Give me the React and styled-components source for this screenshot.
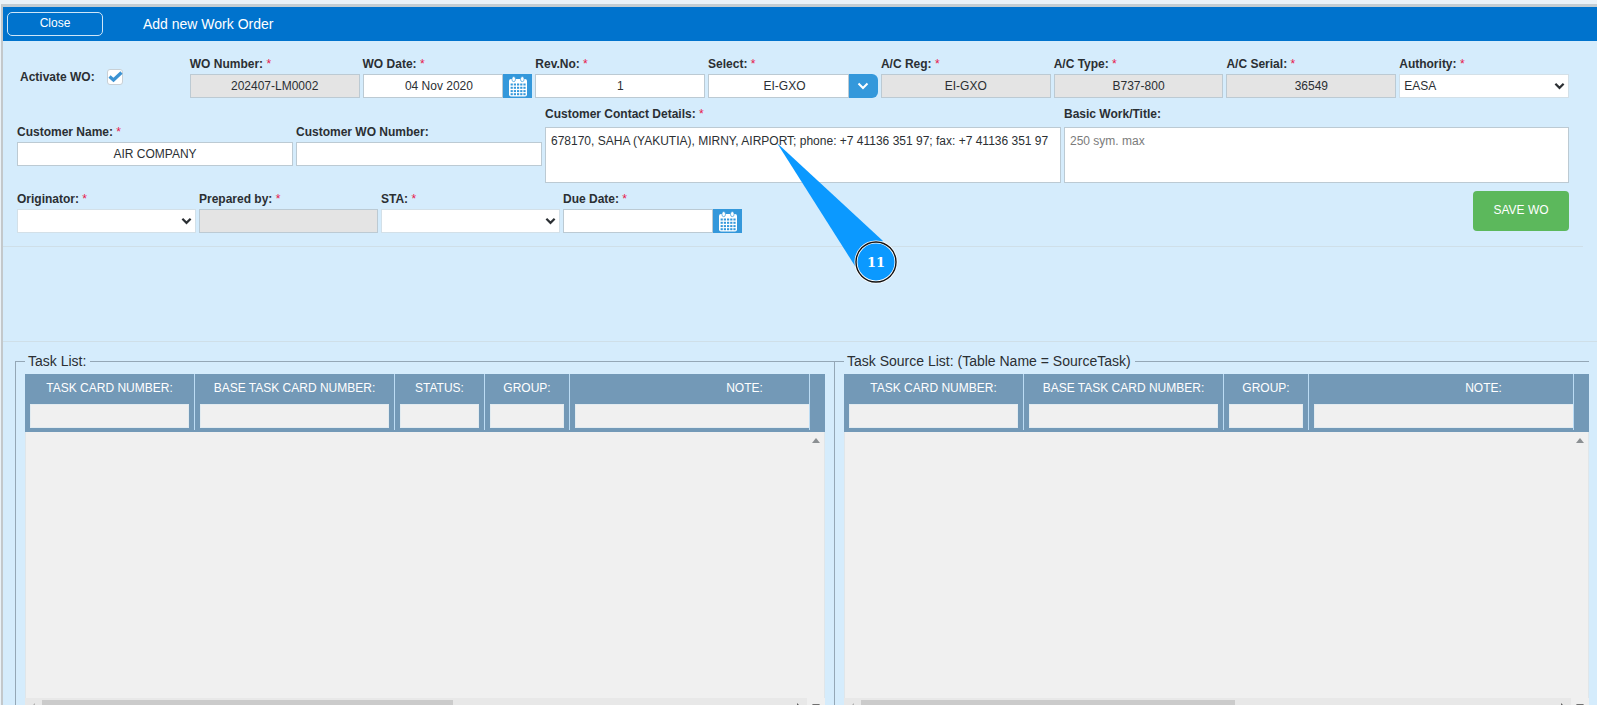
import React from "react";
import styled, { createGlobalStyle, css } from "styled-components";

const Global = createGlobalStyle`
  *, *::before, *::after { box-sizing: border-box; }
  body {
    margin: 0;
    background: #eaf2f8;
    color: #2b2f33;
    font: 12px/16px "Liberation Sans", Arial, sans-serif;
  }
  button, input, select, textarea { font: inherit; color: inherit; margin: 0; border-radius: 0; }
`;

const Page = styled.div`
  height: 100vh;
  overflow: hidden;
  position: relative;
  padding-top: 4px;
`;

const Dialog = styled.main`
  min-height: 100%;
  border-left: 2px solid #c3c8cb;
  border-top: 3px solid #c3cdd3;
  margin-left: 1px;
  background: #d5ecfc;
`;

const TitleBar = styled.header`
  display: flex;
  align-items: center;
  gap: 40px;
  height: 34px;
  padding: 0 4px;
  background: #0073cd;
  color: #fff;
`;

const CloseButton = styled.button`
  width: 96px;
  height: 24px;
  padding: 0 0 2px;
  border: 1px solid #cfe6f8;
  border-radius: 5px;
  background: transparent;
  color: #fff;
`;

const Title = styled.h1`
  margin: 0;
  font-size: 14px;
  font-weight: 400;
`;

const Form = styled.form`
  display: flex;
  flex-direction: column;
  gap: 8px;
  margin-right: 14px;
  padding: 15px 14px 13px;
  border-bottom: 1px solid #cfdfe8;
`;

const Row = styled.div`
  display: grid;
  grid-template-columns: ${(p) => p.$columns};
  column-gap: 3px;
  align-items: ${(p) => p.$align || "end"};
`;

const Field = styled.div`
  display: flex;
  flex-direction: column;
  gap: ${(p) => (p.$tall ? 5 : 2)}px;
  min-width: 0;
`;

const Label = styled.label`
  font-weight: 700;
`;

const Star = styled.span`
  color: #e8174b;
  font-weight: 400;
`;

const control = css`
  width: 100%;
  height: 24px;
  border: 1px solid #bccad3;
  background: ${(p) => (p.readOnly ? "#e4e4e4" : "#fff")};
  outline: 0;
`;

const Input = styled.input`
  ${control}
  min-width: 0;
  padding: 0 4px;
  text-align: center;
`;

const TextArea = styled.textarea`
  ${control}
  display: block;
  height: 56px;
  padding: 5px;
  resize: none;
  &::placeholder { color: #7b7b7b; opacity: 1; }
`;

const SelectWrap = styled.div`
  display: grid;
  align-items: center;
  > * { grid-area: 1 / 1; }
  > svg { justify-self: end; margin-right: 4px; pointer-events: none; }
`;

const Select = styled.select`
  ${control}
  border-color: #d3e0e8;
  padding: 0 4px;
  appearance: none;
`;

const Combo = styled.div`
  display: flex;
  > input { padding-left: 16px; }
`;

const ComboButton = styled.button`
  flex: none;
  display: flex;
  align-items: center;
  justify-content: center;
  width: 29px;
  height: 24px;
  padding: 0;
  border: 0;
  border-radius: ${(p) => (p.$round ? "0 6px 6px 0" : "0")};
  background: #3498db;
  color: #fff;
`;

const Activate = styled.div`
  align-self: center;
  display: flex;
  align-items: center;
  gap: 12px;
  padding-left: 3px;
`;

const Tick = styled.span`
  display: grid;
  > * { grid-area: 1 / 1; }
  > svg { pointer-events: none; }
`;

const Checkbox = styled.input`
  appearance: none;
  width: 16px;
  height: 16px;
  border: 1px solid #c9d0d5;
  border-radius: 3px;
  background: #fff;
`;

const SaveButton = styled.button`
  justify-self: end;
  width: 96px;
  height: 40px;
  padding: 0 0 2px;
  border: 0;
  border-radius: 4px;
  background: #5cb85c;
  color: #fff;
`;

const Spacer = styled.div`
  height: 95px;
  border-bottom: 1px solid #cfdfe8;
`;

const Lists = styled.div`
  display: grid;
  grid-template-columns: 819fr 755fr;
  padding: 11px 8px 0 12px;
`;

const Panel = styled.fieldset`
  min-width: 0;
  margin: 0;
  padding: 5px ${(p) => (p.$last ? 0 : 9)}px 0 9px;
  border: 1px solid #94a7b6;
  border-width: 1px 0 0 1px;
`;

const Legend = styled.legend`
  padding: 0 4px 0 3px;
  font-size: 14px;
`;

const HeadStrip = styled.div`
  height: 58px;
  padding-right: 15px;
  background: #7399b7;
`;

const HeadScroll = styled.div`
  height: 56px;
  overflow: hidden;
  border-right: 1px solid #bcdcf4;
`;

const HeadTable = styled.table`
  table-layout: fixed;
  width: ${(p) => p.$width}px;
  border-spacing: 0;
`;

const HeadCell = styled.th`
  width: ${(p) => p.$width}px;
  height: 56px;
  padding: 6px 5px 2px;
  border-right: 1px solid #bcdcf4;
  color: #fff;
  font-weight: 400;
  vertical-align: top;
`;

const Filter = styled.input`
  display: block;
  width: 100%;
  height: 24px;
  margin-top: 8px;
  border: 1px solid #e2ebf0;
  background: #f0f0f0;
`;

const PanelBody = styled.div`
  display: flex;
  justify-content: flex-end;
  height: 266px;
  padding: 4px 4px 0;
  border: 1px solid #dfe6ea;
  border-width: 0 1px;
  background: #f0f0f0;
`;

const ScrollRow = styled.div`
  display: flex;
  align-items: center;
  justify-content: space-between;
  height: 17px;
  padding-right: 5px;
  background: #f0f0f0;
`;

const ScrollBar = styled.div`
  flex: 1;
  display: flex;
  align-items: center;
  gap: 5px;
  height: 17px;
  margin-right: 5px;
  padding: 0 4px;
  background: #e8e8e8;
`;

const Track = styled.div`
  flex: 1;
`;

const Thumb = styled.div`
  width: ${(p) => p.$size}%;
  height: 13px;
  background: #cbcbcb;
`;

const Callout = styled.svg`
  position: absolute;
  left: 770px;
  top: 140px;
  pointer-events: none;
`;

function CalendarIcon() {
  return (
    <svg width="20" height="21" viewBox="0 0 20 21" aria-hidden="true">
      <path fill="currentColor" d="M1 5Q1 3 3 3H17Q19 3 19 5V18.5Q19 20.5 17 20.5H3Q1 20.5 1 18.5Z" />
      <rect x="4" y=".6" width="3.4" height="5" rx="1.7" fill="#fff" stroke="#3498db" strokeWidth=".7" />
      <rect x="12.6" y=".6" width="3.4" height="5" rx="1.7" fill="#fff" stroke="#3498db" strokeWidth=".7" />
      {[7.5, 10.8, 14.1, 17.2].map((y) =>
        [2.6, 5.8, 9, 12.2, 15.4].map((x) => (
          <rect key={`${x}-${y}`} x={x} y={y} width="2.2" height="2" fill="#3498db" />
        ))
      )}
    </svg>
  );
}

function Chevron({ width = 12, stroke = 2 }) {
  return (
    <svg width={width} height="8" viewBox="0 0 12 8" fill="none" aria-hidden="true">
      <path d="M1.5 1.5L6 6L10.5 1.5" stroke="currentColor" strokeWidth={stroke} />
    </svg>
  );
}

const arrows = {
  up: "M0 7L4 2L8 7Z",
  down: "M0 1L4 6L8 1Z",
  left: "M6 0L2 4L6 8Z",
  right: "M2 0L6 4L2 8Z",
};

function Arrow({ dir, color = "#8b8f92" }) {
  return (
    <svg width="8" height="8" viewBox="0 0 8 8" aria-hidden="true">
      <path d={arrows[dir]} fill={color} />
    </svg>
  );
}

function Labelled({ id, label, required, tall, children }) {
  return (
    <Field $tall={tall}>
      <Label htmlFor={id}>
        {label}
        {required && <Star> *</Star>}
      </Label>
      {children}
    </Field>
  );
}

function TextField({ id, label, required, ...rest }) {
  return (
    <Labelled id={id} label={label} required={required}>
      <Input id={id} {...rest} />
    </Labelled>
  );
}

function ComboField({ id, label, icon, action, round, defaultValue }) {
  return (
    <Labelled id={id} label={label} required>
      <Combo>
        <Input id={id} defaultValue={defaultValue} />
        <ComboButton type="button" aria-label={action} $round={round}>
          {icon}
        </ComboButton>
      </Combo>
    </Labelled>
  );
}

function SelectField({ id, label, options }) {
  return (
    <Labelled id={id} label={label} required>
      <SelectWrap>
        <Select id={id}>
          {options.map((o) => (
            <option key={o}>{o}</option>
          ))}
        </Select>
        <Chevron width={11} stroke={2.4} />
      </SelectWrap>
    </Labelled>
  );
}

function ListPanel({ title, columns, thumb, last }) {
  const total = columns.reduce((sum, c) => sum + c[1], 0);
  return (
    <Panel $last={last}>
      <Legend>{title}</Legend>
      <HeadStrip>
        <HeadScroll>
          <HeadTable $width={total}>
            <thead>
              <tr>
                {columns.map(([name, width]) => (
                  <HeadCell key={name} $width={width} scope="col">
                    {name}
                    <Filter aria-label={name} />
                  </HeadCell>
                ))}
              </tr>
            </thead>
          </HeadTable>
        </HeadScroll>
      </HeadStrip>
      <PanelBody>
        <Arrow dir="up" />
      </PanelBody>
      <ScrollRow>
        <ScrollBar>
          <Arrow dir="left" color="#b0b0b0" />
          <Track>
            <Thumb $size={thumb} />
          </Track>
          <Arrow dir="right" color="#606060" />
        </ScrollBar>
        <Arrow dir="down" color="#707070" />
      </ScrollRow>
    </Panel>
  );
}

export default function App() {
  return (
    <Page>
      <Global />
      <Dialog>
        <TitleBar>
          <CloseButton type="button">Close</CloseButton>
          <Title>Add new Work Order</Title>
        </TitleBar>
        <Form>
          <Row $columns="repeat(9, minmax(0, 1fr))">
            <Activate>
              <Label htmlFor="active">Activate WO:</Label>
              <Tick>
                <Checkbox id="active" type="checkbox" defaultChecked />
                <svg width="16" height="16" viewBox="0 0 16 16" fill="none" aria-hidden="true">
                  <path d="M2.5 7.5L6.5 11L14.5 3.5" stroke="#3c93d3" strokeWidth="3.2" />
                </svg>
              </Tick>
            </Activate>
            <TextField id="number" label="WO Number:" required readOnly defaultValue="202407-LM0002" />
            <ComboField id="date" label="WO Date:" defaultValue="04 Nov 2020" icon={<CalendarIcon />} action="Pick WO date" />
            <TextField id="rev" label="Rev.No:" required defaultValue="1" />
            <ComboField id="select" label="Select:" defaultValue="EI-GXO" icon={<Chevron />} action="Open list" round />
            <TextField id="reg" label="A/C Reg:" required readOnly defaultValue="EI-GXO" />
            <TextField id="type" label="A/C Type:" required readOnly defaultValue="B737-800" />
            <TextField id="serial" label="A/C Serial:" required readOnly defaultValue="36549" />
            <SelectField id="authority" label="Authority:" options={["EASA"]} />
          </Row>
          <Row $columns="276fr 246fr 516fr 505fr" $align="center">
            <TextField id="customer" label="Customer Name:" required defaultValue="AIR COMPANY" />
            <TextField id="customer-wo" label="Customer WO Number:" />
            <Labelled id="contact" label="Customer Contact Details:" required tall>
              <TextArea id="contact" defaultValue="678170, SAHA (YAKUTIA), MIRNY, AIRPORT; phone: +7 41136 351 97; fax: +7 41136 351 97" />
            </Labelled>
            <Labelled id="work" label="Basic Work/Title:" tall>
              <TextArea id="work" placeholder="250 sym. max" />
            </Labelled>
          </Row>
          <Row $columns="repeat(4, 179fr) 824fr" $align="start">
            <SelectField id="originator" label="Originator:" options={[""]} />
            <TextField id="prepared" label="Prepared by:" required readOnly />
            <SelectField id="sta" label="STA:" options={[""]} />
            <ComboField id="due" label="Due Date:" icon={<CalendarIcon />} action="Pick due date" />
            <SaveButton type="button">SAVE WO</SaveButton>
          </Row>
        </Form>
        <Spacer />
        <Lists>
          <ListPanel
            title="Task List:"
            thumb={55}
            columns={[
              ["TASK CARD NUMBER:", 170],
              ["BASE TASK CARD NUMBER:", 200],
              ["STATUS:", 90],
              ["GROUP:", 85],
              ["NOTE:", 350],
            ]}
          />
          <ListPanel
            title="Task Source List: (Table Name = SourceTask)"
            thumb={54}
            last
            columns={[
              ["TASK CARD NUMBER:", 180],
              ["BASE TASK CARD NUMBER:", 200],
              ["GROUP:", 85],
              ["NOTE:", 350],
            ]}
          />
        </Lists>
      </Dialog>
      <Callout width="130" height="150" viewBox="0 0 130 150">
        <path d="M7 3L85 126L113 101Z" fill="#0b99ff" />
        <circle cx="106" cy="122" r="20" fill="#0b99ff" stroke="#fff" strokeWidth="3" />
        <circle cx="106" cy="122" r="20" fill="none" stroke="#111" strokeWidth="1.4" />
        <text x="106" y="127" textAnchor="middle" fill="#fff" fontFamily="'DejaVu Serif', serif" fontWeight="700" fontSize="13">
          11
        </text>
      </Callout>
    </Page>
  );
}
